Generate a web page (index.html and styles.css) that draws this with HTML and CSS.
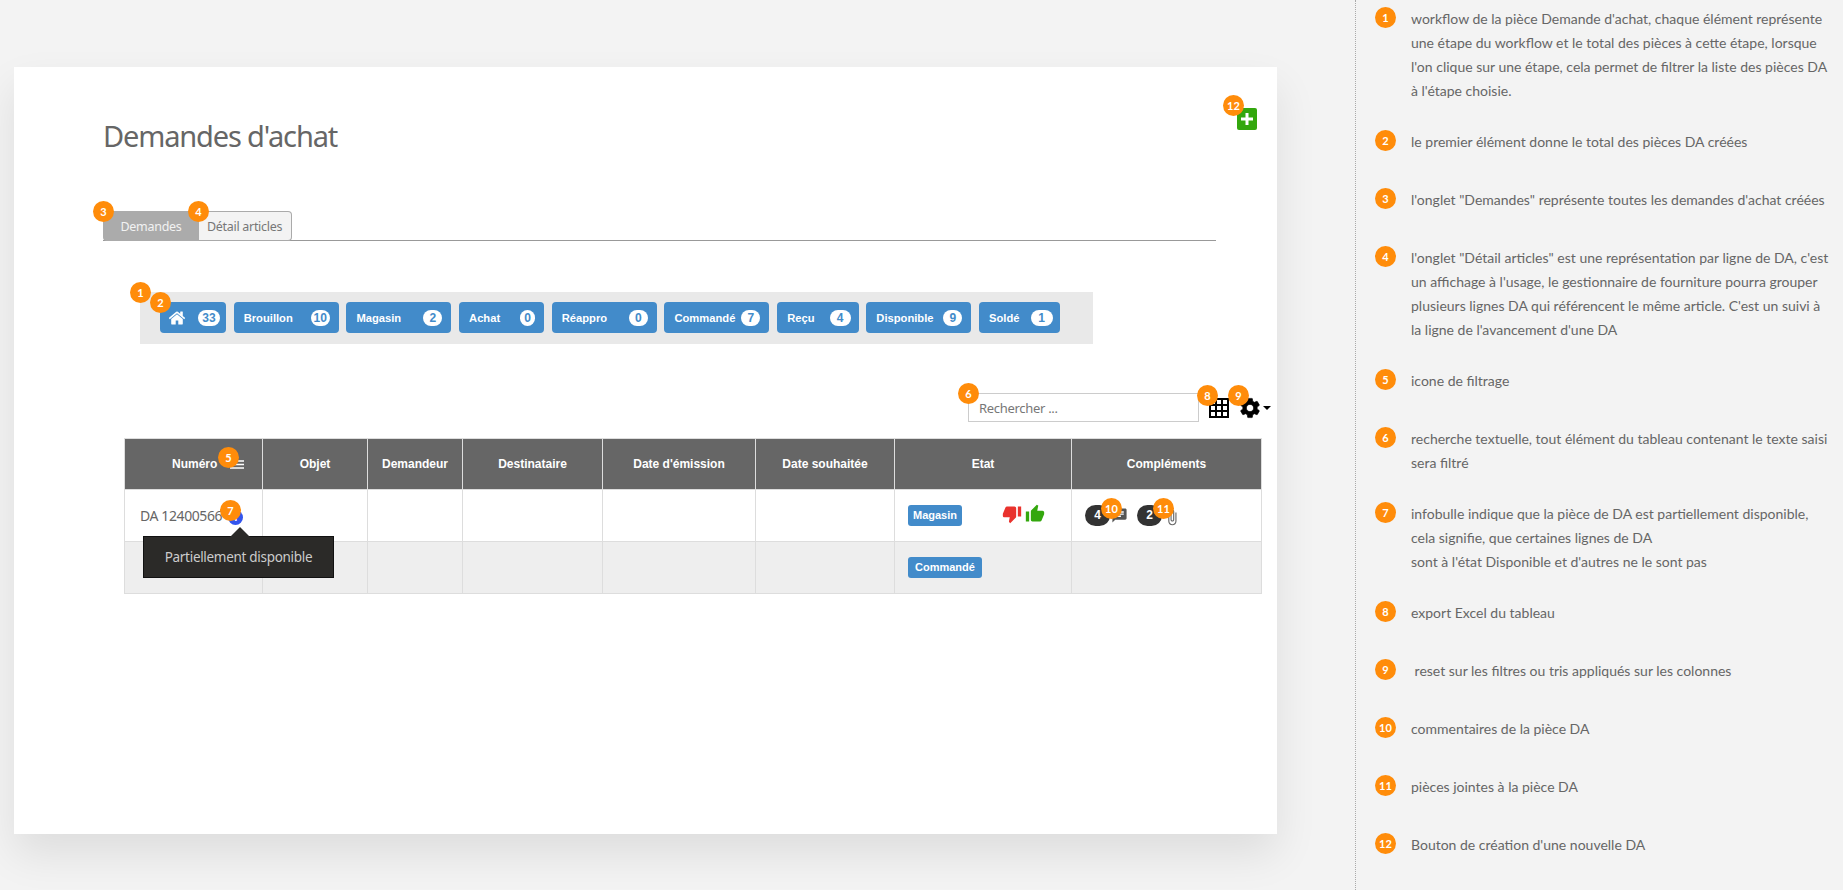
FILE: index.html
```html
<!DOCTYPE html>
<html lang="fr">
<head>
  <meta charset="UTF-8">
  <title>Demandes d'achat</title>
  <link rel="stylesheet" href="styles.css">
</head>
<body>
  <main class="workspace">
    <div class="card">
      <button class="add-btn" type="button" aria-label="Nouvelle DA">
        <svg viewBox="0 0 20 22" width="20" height="22"><path d="M8.500 5h3v4.500H16v3h-4.500V17h-3v-4.500H4v-3h4.500z" fill="#fff"/></svg>
      </button>

      <h1 class="title">Demandes d'achat</h1>

      <div class="tabs">
        <span class="tab tab-active">Demandes</span>
        <span class="tab">Détail articles</span>
      </div>

      <div class="workflow">
        <a class="step step-home">
          <svg viewBox="0 0 1792 1792" width="18" height="18"><path d="M1472 992v480q0 26-19 45t-45 19h-384v-384H768v384H384q-26 0-45-19t-19-45V992q0-1 .5-3t.5-3l575-474 575 474q1 2 1 6zm223-69l-62 74q-8 9-21 11h-3q-13 0-21-7L896 424 204 1001q-12 8-24 7-13-2-21-11l-62-74q-8-10-7-23.500t11-21.500l719-599q32-26 76-26t76 26l244 204V288q0-14 9-23t23-9h192q14 0 23 9t9 23v408l219 182q10 8 11 21.500t-7 23.500z" fill="#fff"/></svg>
          <span class="count count-lg">33</span>
        </a>
        <a class="step step-m">Brouillon <span class="count">10</span></a>
        <a class="step step-m">Magasin <span class="count">2</span></a>
        <a class="step step-s">Achat <span class="count count-sm">0</span></a>
        <a class="step step-m">Réappro <span class="count">0</span></a>
        <a class="step step-m">Commandé <span class="count">7</span></a>
        <a class="step step-r">Reçu <span class="count count-md">4</span></a>
        <a class="step step-m">Disponible <span class="count">9</span></a>
        <a class="step step-r2">Soldé <span class="count count-lg">1</span></a>
      </div>

      <div class="toolbar">
        <input class="search" type="text" placeholder="Rechercher ...">
        <svg class="excel" viewBox="0 0 20 20" width="20" height="20"><path d="M1 1h18v18H1zM7 1v18M13 1v18M1 7h18M1 13h18" fill="none" stroke="#000" stroke-width="2"/></svg>
        <svg class="gear" viewBox="0 0 24 24" width="24" height="24"><path d="M19.140 12.940c.04-.3.06-.61.06-.94 0-.32-.02-.64-.07-.94l2.030-1.580c.18-.14.23-.41.12-.61l-1.920-3.320c-.12-.22-.37-.29-.59-.22l-2.390.96c-.5-.38-1.030-.7-1.620-.94l-.36-2.540c-.04-.24-.24-.41-.48-.41h-3.840c-.24 0-.43.17-.47.41l-.36 2.540c-.59.24-1.130.57-1.620.94l-2.390-.96c-.22-.08-.47 0-.59.22L2.740 8.870c-.12.21-.08.47.12.61l2.030 1.580c-.05.3-.09.63-.09.94s.02.64.07.94l-2.030 1.580c-.18.14-.23.41-.12.61l1.920 3.320c.12.22.37.29.59.22l2.390-.96c.5.38 1.030.7 1.620.94l.36 2.540c.05.24.24.41.48.41h3.840c.24 0 .44-.17.47-.41l.36-2.540c.59-.24 1.130-.56 1.620-.94l2.390.96c.22.08.47 0 .59-.22l1.920-3.320c.12-.22.07-.47-.12-.61l-2.010-1.580zM12 15.600c-1.980 0-3.600-1.620-3.600-3.600s1.620-3.600 3.600-3.600 3.600 1.620 3.600 3.600-1.620 3.600-3.600 3.600z" fill="#000" stroke="#000" stroke-width=".6"/></svg>
        <span class="caret"></span>
      </div>

      <table class="grid">
        <thead>
          <tr>
            <th class="col-num">
              <span class="th-num">Numéro
                <svg viewBox="0 0 14 9" width="14" height="9"><path d="M0 1h14M0 4.500h14M0 8h14" stroke="#fff" stroke-width="1.400"/></svg>
              </span>
            </th>
            <th class="col-obj">Objet</th>
            <th class="col-dem">Demandeur</th>
            <th class="col-dest">Destinataire</th>
            <th class="col-em">Date d'émission</th>
            <th class="col-sou">Date souhaitée</th>
            <th class="col-etat">Etat</th>
            <th>Compléments</th>
          </tr>
        </thead>
        <tbody>
          <tr>
            <td class="cell-num">
              <span class="num-text">DA 12400566</span><span class="info">i</span>
              <div class="tooltip">Partiellement disponible</div>
            </td>
            <td></td>
            <td></td>
            <td></td>
            <td></td>
            <td></td>
            <td>
              <div class="cell-etat">
                <span class="label">Magasin</span>
                <span class="thumbs">
                  <svg viewBox="0 0 24 24" width="20" height="20"><path d="M15 3H6c-.83 0-1.540.5-1.840 1.220l-3.020 7.050c-.09.23-.14.47-.14.73v2c0 1.100.9 2 2 2h6.310l-.95 4.570-.03.32c0 .41.17.79.44 1.060L9.830 23l6.590-6.590c.36-.36.58-.86.58-1.410V5c0-1.100-.9-2-2-2zm4 0v12h4V3h-4z" fill="#e9322d"/></svg>
                  <svg viewBox="0 0 24 24" width="20" height="20"><path d="M1 21h4V9H1v12zm22-11c0-1.100-.9-2-2-2h-6.310l.95-4.570.03-.32c0-.41.17-.79.44-1.060L14.170 1 7.590 7.590C7.220 7.950 7 8.450 7 9v10c0 1.100.9 2 2 2h9c.83 0 1.540-.5 1.840-1.220l3.020-7.050c.09-.23.14-.47.14-.73v-2z" fill="#33a70d"/></svg>
                </span>
              </div>
            </td>
            <td>
              <div class="cell-extra">
                <span class="pill">4</span>
                <svg class="ico-chat" viewBox="0 0 24 24" width="17" height="17"><path d="M20 2H4c-1.100 0-1.990.9-1.990 2L2 22l4-4h14c1.100 0 2-.9 2-2V4c0-1.100-.9-2-2-2zM6 9h12v2H6V9zm8 5H6v-2h8v2zm4-6H6V6h12v2z" fill="#555"/></svg>
                <span class="pill pill-second">2</span>
                <svg class="ico-clip" viewBox="0 0 24 24" width="18" height="18"><path d="M16.500 6v11.500c0 2.210-1.790 4-4 4s-4-1.790-4-4V5c0-1.380 1.120-2.500 2.500-2.500s2.500 1.120 2.500 2.500v10.500c0 .55-.45 1-1 1s-1-.45-1-1V6H10v9.500c0 1.380 1.120 2.500 2.500 2.500s2.500-1.120 2.500-2.500V5c0-2.210-1.790-4-4-4S7 2.790 7 5v12.500c0 3.040 2.460 5.500 5.500 5.500s5.500-2.460 5.500-5.500V6h-1.500z" fill="#666"/></svg>
              </div>
            </td>
          </tr>
          <tr class="row-alt">
            <td></td>
            <td></td>
            <td></td>
            <td></td>
            <td></td>
            <td></td>
            <td>
              <div class="cell-etat"><span class="label label-lg">Commandé</span></div>
            </td>
            <td></td>
          </tr>
        </tbody>
      </table>

      <span class="marker m1">1</span>
      <span class="marker m2">2</span>
      <span class="marker m3">3</span>
      <span class="marker m4">4</span>
      <span class="marker m5">5</span>
      <span class="marker m6">6</span>
      <span class="marker m7">7</span>
      <span class="marker m8">8</span>
      <span class="marker m9">9</span>
      <span class="marker m10">10</span>
      <span class="marker m11">11</span>
      <span class="marker m12">12</span>
    </div>
  </main>

  <aside class="legend">
    <div class="legend-item"><span class="dot">1</span><p>workflow de la pièce Demande d'achat, chaque élément représente une étape du workflow et le total des pièces à cette étape, lorsque l'on clique sur une étape, cela permet de filtrer la liste des pièces DA à l'étape choisie.</p></div>
    <div class="legend-item"><span class="dot">2</span><p>le premier élément donne le total des pièces DA créées</p></div>
    <div class="legend-item"><span class="dot">3</span><p>l'onglet "Demandes" représente toutes les demandes d'achat créées</p></div>
    <div class="legend-item"><span class="dot">4</span><p>l'onglet "Détail articles" est une représentation par ligne de DA, c'est un affichage à l'usage, le gestionnaire de fourniture pourra grouper plusieurs lignes DA qui référencent le même article. C'est un suivi à la ligne de l'avancement d'une DA</p></div>
    <div class="legend-item"><span class="dot">5</span><p>icone de filtrage</p></div>
    <div class="legend-item"><span class="dot">6</span><p>recherche textuelle, tout élément du tableau contenant le texte saisi sera filtré</p></div>
    <div class="legend-item"><span class="dot">7</span><p>infobulle indique que la pièce de DA est partiellement disponible, cela signifie, que certaines lignes de DA<br>sont à l'état Disponible et d'autres ne le sont pas</p></div>
    <div class="legend-item"><span class="dot">8</span><p>export Excel du tableau</p></div>
    <div class="legend-item"><span class="dot">9</span><p>&nbsp;reset sur les filtres ou tris appliqués sur les colonnes</p></div>
    <div class="legend-item"><span class="dot">10</span><p>commentaires de la pièce DA</p></div>
    <div class="legend-item"><span class="dot">11</span><p>pièces jointes à la pièce DA</p></div>
    <div class="legend-item"><span class="dot">12</span><p>Bouton de création d'une nouvelle DA</p></div>
  </aside>
</body>
</html>
```

FILE: styles.css
```css
html, body {
  height: 100%;
}

body {
  margin: 0;
  height: 890px;
  overflow: hidden;
  display: flex;
  background: #f3f3f3;
  font-family: "Noto Sans", Arial, sans-serif;
  color: #666;
}

.workspace {
  width: 1355px;
  flex: none;
  padding: 67px 0 0 14px;
  box-sizing: border-box;
}

.card {
  position: relative;
  width: 1263px;
  height: 767px;
  padding-top: 49px;
  box-sizing: border-box;
  background: #fff;
  box-shadow: 0 20px 40px rgba(0, 0, 0, .09);
}

.add-btn {
  position: absolute;
  left: 1223px;
  top: 41px;
  width: 20px;
  height: 22px;
  padding: 0;
  border: 0;
  border-radius: 2px;
  background: #33a70d;
  line-height: 0;
}

.title {
  margin: 0 0 55px 89px;
  font-size: 29px;
  font-weight: 400;
  line-height: 40px;
  letter-spacing: -1.150px;
  color: #666;
}

.tabs {
  display: flex;
  margin-left: 89px;
  width: 1113px;
  height: 30px;
  border-bottom: 1px solid #999;
  box-sizing: border-box;
  font-size: 12.500px;
  letter-spacing: -.3px;
}

.tab {
  display: flex;
  align-items: center;
  padding: 0 9px 0 8px;
  height: 30px;
  box-sizing: border-box;
  background: #f3f3f3;
  border: 1px solid #aaa;
  border-left: 0;
  border-radius: 0 4px 4px 0;
  color: #777;
}

.tab-active {
  justify-content: center;
  width: 96px;
  padding: 0;
  background: #ababab;
  border: 0;
  border-radius: 4px 0 0 4px;
  color: #f2f2f2;
}

.workflow {
  display: flex;
  gap: 7.700px;
  margin: 51px 0 49px 126px;
  width: 953px;
  height: 52px;
  padding: 10px 20px;
  box-sizing: border-box;
  background: #e9e9e9;
}

.step {
  display: flex;
  align-items: center;
  justify-content: space-between;
  height: 31px;
  padding: 0 9px 0 10px;
  box-sizing: border-box;
  border-radius: 4px;
  background: #428bca;
  color: #fff;
  font: bold 11.200px "Liberation Sans", Arial, sans-serif;
}

.step-home { width: 66px; padding-left: 8px; padding-right: 6px; }
.step-m { width: 105px; }
.step-s { width: 85px; }
.step-r { width: 81.500px; padding-right: 8px; }
.step-r2 { width: 80.500px; padding-right: 7px; }

.count {
  min-width: 19px;
  height: 16px;
  border-radius: 8px;
  background: #fff;
  color: #428bca;
  font-size: 12px;
  line-height: 16px;
  text-align: center;
}

.count-sm { min-width: 15px; }
.count-md { min-width: 21px; }
.count-lg { min-width: 22px; }

.toolbar {
  display: flex;
  align-items: center;
  margin-left: 954px;
  height: 29px;
}

.search {
  width: 231px;
  height: 29px;
  padding: 0 10px;
  box-sizing: border-box;
  border: 1px solid #ccc;
  outline: 0;
  font: 13px "Noto Sans", Arial, sans-serif;
  letter-spacing: -.3px;
}

.search::placeholder {
  color: #777;
  opacity: 1;
}

.excel {
  margin-left: 10px;
}

.gear {
  margin-left: 9px;
}

.caret {
  width: 0;
  height: 0;
  margin-left: 1px;
  border: 4px solid transparent;
  border-top-color: #000;
  border-bottom: 0;
}

.grid {
  margin: 16px 0 0 110px;
  width: 1138px;
  table-layout: fixed;
  border-collapse: collapse;
  font-size: 14px;
}

.grid th {
  height: 50px;
  padding: 0;
  background: #666;
  border: 1px solid #ddd;
  color: #fff;
  font: bold 12px "Liberation Sans", Arial, sans-serif;
}

.grid td {
  height: 51px;
  padding: 0;
  border: 1px solid #ddd;
}

.row-alt td {
  background: #eee;
}

.col-num { width: 137px; }
.col-obj { width: 104px; }
.col-dem { width: 94px; }
.col-dest { width: 139px; }
.col-em { width: 152px; }
.col-sou { width: 138px; }
.col-etat { width: 176px; }

.th-num {
  display: flex;
  align-items: center;
  gap: 13px;
  padding-left: 47px;
}

.cell-num {
  position: relative;
  padding-left: 15px !important;
}

.num-text {
  letter-spacing: -.4px;
}

.info {
  display: inline-block;
  width: 15px;
  height: 15px;
  margin-left: 6px;
  border-radius: 50%;
  background: #3355ee;
  color: #fff;
  font: bold 11px/15px "Liberation Sans", Arial, sans-serif;
  text-align: center;
  vertical-align: middle;
}

.tooltip {
  position: absolute;
  left: 18px;
  top: 46px;
  z-index: 2;
  width: 191px;
  height: 42px;
  box-sizing: border-box;
  background: #2b2a28;
  border: 1px solid #111;
  color: #ccc;
  font-size: 13.500px;
  letter-spacing: -.3px;
  line-height: 40px;
  text-align: center;
}

.tooltip::before {
  content: "";
  position: absolute;
  left: 86px;
  top: -10px;
  border: 10px solid transparent;
  border-top: 0;
  border-bottom-color: #2b2a28;
}

.cell-etat {
  display: flex;
  align-items: center;
  padding-left: 13px;
}

.label {
  height: 21px;
  padding: 0 5px;
  border-radius: 3px;
  background: #428bca;
  color: #fff;
  font: bold 11px/21px "Liberation Sans", Arial, sans-serif;
}

.label-lg {
  padding: 0 7px;
}

.thumbs {
  display: flex;
  gap: 3px;
  margin-left: 40px;
  margin-top: -3px;
}

.cell-extra {
  display: flex;
  align-items: center;
  padding-left: 13px;
}

.pill {
  width: 25px;
  height: 21px;
  border-radius: 11px;
  background: #333;
  color: #fff;
  font: bold 12px/21px "Liberation Sans", Arial, sans-serif;
  text-align: center;
}

.pill-second {
  margin-left: 9px;
}

.ico-chat {
  margin-left: 1px;
}

.ico-clip {
  margin-left: 1px;
  margin-top: 2px;
}

.marker, .dot {
  width: 21px;
  height: 21px;
  border-radius: 50%;
  background: #ff8c0a;
  color: #fff;
  font: bold 11px/21px Lato, Arial, sans-serif;
  text-align: center;
}

.marker {
  position: absolute;
  z-index: 3;
}

.m1 { left: 116px; top: 215px; }
.m2 { left: 136px; top: 225px; }
.m3 { left: 79px; top: 134px; }
.m4 { left: 174px; top: 134px; }
.m5 { left: 204px; top: 380px; }
.m6 { left: 944px; top: 316px; }
.m7 { left: 206px; top: 433px; }
.m8 { left: 1183px; top: 318px; }
.m9 { left: 1214px; top: 318px; }
.m10 { left: 1087px; top: 431px; }
.m11 { left: 1139px; top: 431px; }
.m12 { left: 1209px; top: 28px; }

.legend {
  flex: 1;
  padding: 7px 0 0 19px;
  border-left: 1px dotted #aaa;
  font-family: Lato, Arial, sans-serif;
  font-size: 14px;
  line-height: 24px;
  color: #666;
}

.legend-item {
  display: flex;
  min-height: 31px;
  margin-bottom: 27px;
}

.dot {
  flex: none;
}

.legend-item p {
  width: 418px;
  margin: 0 0 0 15px;
}
```
